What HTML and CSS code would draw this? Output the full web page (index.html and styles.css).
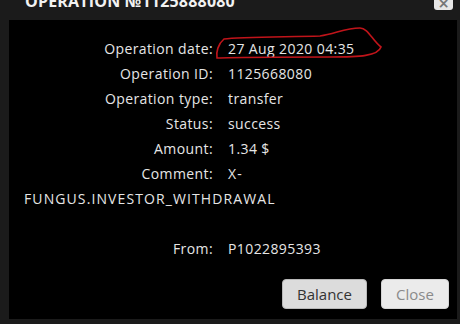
FILE: index.html
```html
<!DOCTYPE html>
<html>
<head>
<meta charset="utf-8">
<link rel="stylesheet" href="styles.css">
</head>
<body>
<div class="dialog">
  <div class="header">
    <div class="title">OPERATION №1125888080</div>
    <button class="x">×</button>
  </div>
  <div class="panel">
    <div class="rows">
      <div class="row"><span class="label">Operation date:</span><span class="value">27 Aug 2020 04:35</span></div>
      <div class="row"><span class="label">Operation ID:</span><span class="value">1125668080</span></div>
      <div class="row"><span class="label">Operation type:</span><span class="value">transfer</span></div>
      <div class="row"><span class="label">Status:</span><span class="value">success</span></div>
      <div class="row"><span class="label">Amount:</span><span class="value">1.34 $</span></div>
      <div class="row"><span class="label">Comment:</span><span class="value wide">X-FUNGUS.INVESTOR_WITHDRAWAL</span></div>
      <div class="row empty"></div>
      <div class="row"><span class="label">From:</span><span class="value">P1022895393</span></div>
    </div>
    <div class="buttons">
      <button class="btn primary">Balance</button>
      <button class="btn muted">Close</button>
    </div>
    <svg class="mark" viewBox="0 0 460 324" width="460" height="324">
      <path d="M224 39 C240 37 290 37 320 36 C335 34 345 28 360 28 C368 28 372 40 381 47 C378 56 360 57 330 57 C290 57 240 57 217 58 C216 52 218 44 224 39 Z" fill="none" stroke="#c0141a" stroke-width="1.6"/>
    </svg>
  </div>
</div>
</body>
</html>
```
FILE: styles.css
```css
html, body {
  margin: 0;
  padding: 0;
  background: #1b1b1b;
  width: 460px;
  height: 324px;
  overflow: hidden;
}
.dialog {
  width: 460px;
  height: 324px;
  display: flex;
  flex-direction: column;
}
.header {
  height: 20px;
  position: relative;
  overflow: hidden;
}
.title {
  position: absolute;
  left: 25px;
  top: -10px;
  font-family: "Open Sans", sans-serif;
  font-weight: 700;
  font-size: 16px;
  color: #f2f2f2;
  letter-spacing: 0.2px;
  line-height: 22px;
}
.x {
  position: absolute;
  right: 7px;
  top: -8px;
  width: 19px;
  height: 18px;
  border: none;
  border-radius: 3px;
  background: #e6e6e6;
  color: #777;
  font-family: "DejaVu Sans", sans-serif;
  font-weight: 700;
  font-size: 14px;
  line-height: 18px;
  padding: 0;
  padding-top: 2px;
}
.panel {
  margin-left: 9px;
  width: 448px;
  height: 299px;
  background: #000;
  box-sizing: border-box;
  padding: 16px 8px 0 15px;
  position: relative;
}
.rows {
  font-family: "Open Sans", sans-serif;
  font-size: 14px;
  color: #e6e6e6;
  line-height: 25px;
  letter-spacing: 0.4px;
}
.row {
  min-height: 25px;
}
.label {
  display: inline-block;
  width: 189px;
  text-align: right;
  margin-right: 15px;
}
.wide {
  letter-spacing: 1.1px;
}
.buttons {
  display: flex;
  justify-content: flex-end;
  gap: 14px;
  margin-top: 18px;
}
.btn {
  height: 30px;
  border-radius: 4px;
  font-family: "Open Sans", sans-serif;
  font-size: 15px;
  padding: 0;
}
.primary {
  width: 85px;
  background: #dcdcdc;
  border: 1px solid #b9b9b9;
  color: #333;
}
.muted {
  width: 68px;
  background: #ebebeb;
  border: 1px solid #d5d5d5;
  color: #8a8a8a;
}
.mark {
  position: absolute;
  left: -9px;
  top: -20px;
  pointer-events: none;
}
```
